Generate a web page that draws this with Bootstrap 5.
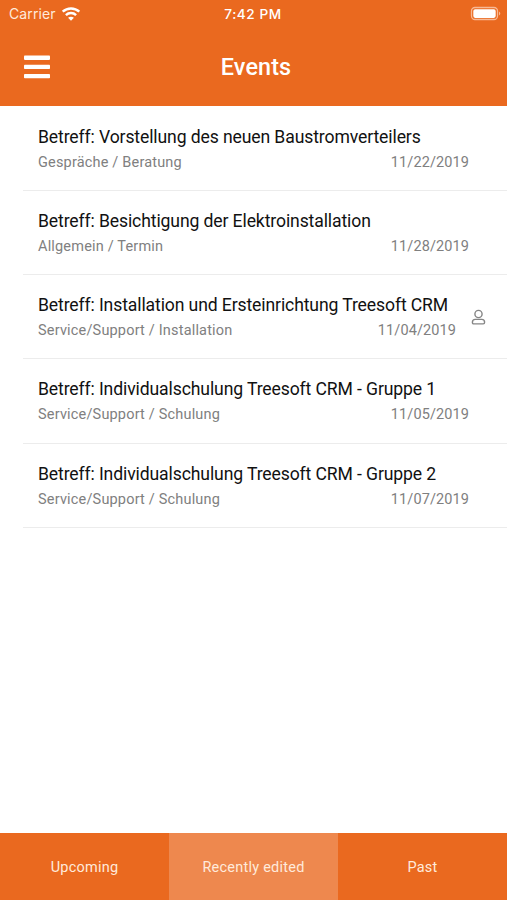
<!DOCTYPE html>
<html lang="de">
<head>
<meta charset="utf-8">
<meta name="viewport" content="width=device-width, initial-scale=1">
<title>Events</title>
<link href="https://cdn.jsdelivr.net/npm/bootstrap@5.3.0/dist/css/bootstrap.min.css" rel="stylesheet">
<style>
body{font-family:Roboto,"Noto Sans",sans-serif;background:#fff}
.app-head{background:#ea691f;height:105.5px}
.status-bar{height:28px;font:400 14px/28px Inter,sans-serif;color:#fff}
.status-bar>div{flex:1 1 0;min-width:0}
.carrier{padding-left:9px;letter-spacing:.1px;color:#ffeadb}
.carrier svg{margin-left:5px}
.clock{font-weight:500;font-size:13.6px;letter-spacing:.55px;padding-right:1px}
.battery{padding-right:5px}
.title-bar{height:77.5px}
.title-bar>div{flex:1 1 0}
.app-title{font-size:23.4px;font-weight:500;line-height:28px;letter-spacing:.1px;padding:1px 0 0 5px}
.events{padding:1px 0 0 23px}
.event-item{height:84.33px;border-color:#ececec!important;border-width:0 0 1.5px!important;padding:17px 38px 0 15px!important;border-radius:0!important;background:none}
.event-item.shared{padding-right:21px!important}
.subject{font-size:17.6px;line-height:26px;color:#111;white-space:nowrap;letter-spacing:-.12px}
.meta{font-size:14.5px;line-height:26px;color:#808080;letter-spacing:.18px}
.meta .date{letter-spacing:.1px}
.person{margin-left:15px;margin-top:17px}
.tabs-bottom{height:67.5px;background:#ea691f}
.tabs-bottom .nav-link{color:#ffeadb;font-size:14.5px;letter-spacing:.23px;border-radius:0;padding:3px 0 0}
.tabs-bottom .nav-link.active{background:#ee884e;color:#ffeadb}
</style>
</head>
<body class="vh-100 d-flex flex-column overflow-hidden">
<header class="app-head flex-shrink-0 text-white">
  <div class="status-bar d-flex">
    <div class="carrier d-flex align-items-center"><span>Carrier</span>
      <svg width="20" height="15" viewBox="0 0 20 15" fill="none" stroke="#fff" stroke-width="2.5"><path d="M1.700 4.700C6.400.4 13.600.4 18.300 4.700M4.900 8.100c2.900-2.700 7.300-2.700 10.200 0"/><path d="M10 13.700l-2.900-2.900c1.700-1.500 4.100-1.500 5.800 0z" fill="#fff" stroke="none"/></svg>
    </div>
    <div class="clock text-center"><span class="me-1">7:42 PM</span></div>
    <div class="battery d-flex justify-content-end align-items-center">
      <svg width="32" height="16" viewBox="0 0 32 16"><rect x="1.5" y="1.5" width="26" height="12" rx="3.5" fill="none" stroke="#f7b995" stroke-width="1.3"/><rect x="3.3" y="3.3" width="22.4" height="8.6" rx="1.8" fill="#fff"/><path d="M29 5.5q2.6 2 0 4z" fill="#f7b995"/></svg>
    </div>
  </div>
  <div class="title-bar d-flex align-items-center">
    <div><svg class="d-block ms-4" width="26" height="24" viewBox="0 0 26 24" fill="#fff"><rect width="26" height="4.4" y=".5" rx=".8"/><rect y="9.7" width="26" height="4.4" rx=".8"/><rect y="18.9" width="26" height="4.4" rx=".8"/></svg></div>
    <h1 class="app-title m-0 text-center">Events</h1>
    <div></div>
  </div>
</header>
<main class="events flex-grow-1">
  <div class="list-group">
    <div class="list-group-item event-item"><div class="subject">Betreff: Vorstellung des neuen Baustromverteilers</div><div class="meta d-flex justify-content-between"><span>Gespräche / Beratung</span><span class="date">11/22/2019</span></div></div>
    <div class="list-group-item event-item"><div class="subject">Betreff: Besichtigung der Elektroinstallation</div><div class="meta d-flex justify-content-between"><span>Allgemein / Termin</span><span class="date">11/28/2019</span></div></div>
    <div class="list-group-item event-item shared d-flex">
      <div class="flex-grow-1"><div class="subject">Betreff: Installation und Ersteinrichtung Treesoft CRM</div><div class="meta d-flex justify-content-between"><span>Service/Support / Installation</span><span class="date">11/04/2019</span></div></div>
      <svg class="person flex-shrink-0" width="15" height="17" viewBox="0 0 15 17" fill="none" stroke="#858585" stroke-width="1.4"><circle cx="7.5" cy="5" r="3.6"/><path d="M4.2 10.4h6.6c1.8 0 2.8 1.2 2.8 2.9 0 1-.5 1.6-1.4 1.6H2.8c-.9 0-1.4-.6-1.4-1.6 0-1.700 1-2.900 2.800-2.900z"/></svg>
    </div>
    <div class="list-group-item event-item"><div class="subject">Betreff: Individualschulung Treesoft CRM - Gruppe 1</div><div class="meta d-flex justify-content-between"><span>Service/Support / Schulung</span><span class="date">11/05/2019</span></div></div>
    <div class="list-group-item event-item"><div class="subject">Betreff: Individualschulung Treesoft CRM - Gruppe 2</div><div class="meta d-flex justify-content-between"><span>Service/Support / Schulung</span><span class="date">11/07/2019</span></div></div>
  </div>
</main>
<nav class="nav nav-pills nav-justified flex-nowrap tabs-bottom flex-shrink-0">
  <a class="nav-link d-flex align-items-center justify-content-center" href="#">Upcoming</a>
  <a class="nav-link active d-flex align-items-center justify-content-center" aria-current="page" href="#">Recently edited</a>
  <a class="nav-link d-flex align-items-center justify-content-center" href="#">Past</a>
</nav>
<script src="https://cdn.jsdelivr.net/npm/bootstrap@5.3.0/dist/js/bootstrap.bundle.min.js"></script>
</body>
</html>
